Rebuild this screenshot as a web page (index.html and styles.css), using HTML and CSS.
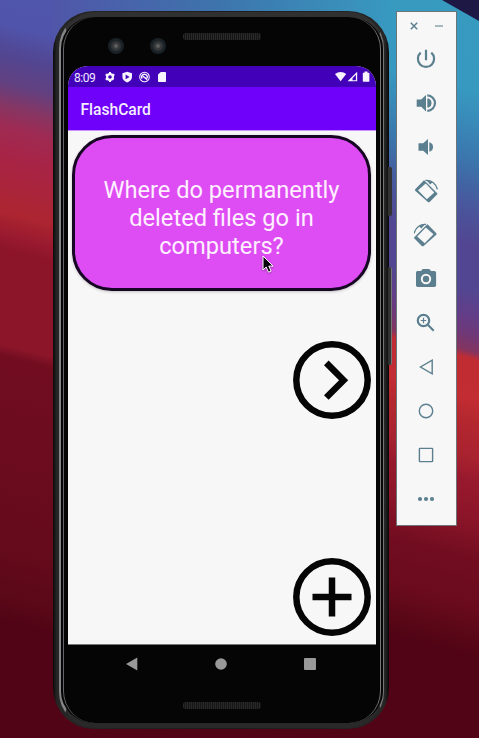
FILE: index.html
```html
<!DOCTYPE html>
<html lang="en">
<head>
<meta charset="utf-8">
<title>FlashCard</title>
<link rel="stylesheet" href="styles.css">
</head>
<body>
<svg class="wallpaper" viewBox="0 0 479 738" preserveAspectRatio="none" aria-hidden="true">
  <defs>
    <linearGradient id="west" gradientUnits="userSpaceOnUse" x1="27" y1="0" x2="-146.6" y2="694.6">
      <stop offset="0" stop-color="#5056ab"/><stop offset=".04" stop-color="#5054ab"/><stop offset=".08" stop-color="#524692"/><stop offset=".12" stop-color="#624080"/><stop offset=".15" stop-color="#863664"/><stop offset=".18" stop-color="#9f2a52"/><stop offset=".22" stop-color="#a82446"/><stop offset=".27" stop-color="#ab2538"/><stop offset=".295" stop-color="#ac2530"/><stop offset=".33" stop-color="#97182f"/><stop offset=".345" stop-color="#8c152a"/><stop offset=".475" stop-color="#8c152a"/><stop offset=".49" stop-color="#720d20"/><stop offset=".64" stop-color="#6b0c1e"/><stop offset=".76" stop-color="#630a1b"/><stop offset=".82" stop-color="#5a0818"/><stop offset=".85" stop-color="#500415"/>
    </linearGradient>
    <linearGradient id="east" gradientUnits="userSpaceOnUse" x1="468" y1="0" x2="282.3" y2="687.8">
      <stop offset="0" stop-color="#379abf"/><stop offset=".12" stop-color="#3799c0"/><stop offset=".165" stop-color="#398ab8"/><stop offset=".215" stop-color="#3b76ac"/><stop offset=".25" stop-color="#4264a2"/><stop offset=".285" stop-color="#4a549a"/><stop offset=".33" stop-color="#524692"/><stop offset=".39" stop-color="#524692"/><stop offset=".427" stop-color="#633d88"/><stop offset=".454" stop-color="#703876"/><stop offset=".475" stop-color="#85345f"/><stop offset=".485" stop-color="#c02c33"/><stop offset=".54" stop-color="#c22c32"/><stop offset=".57" stop-color="#b4272f"/><stop offset=".62" stop-color="#a8222f"/><stop offset=".65" stop-color="#98192d"/><stop offset=".7" stop-color="#8c1529"/><stop offset=".755" stop-color="#720d20"/><stop offset=".82" stop-color="#6a0b1d"/><stop offset=".86" stop-color="#5a0717"/><stop offset=".89" stop-color="#500415"/>
    </linearGradient>
    <linearGradient id="north" x1="0" y1="0" x2="1" y2="0">
      <stop offset="0" stop-color="#5056a9"/><stop offset=".5" stop-color="#3d75ac"/><stop offset="1" stop-color="#3899c0"/>
    </linearGradient>
  </defs>
  <rect width="240" height="738" fill="url(#west)"/>
  <rect x="240" width="239" height="738" fill="url(#east)"/>
  <rect x="54" width="336" height="40" fill="url(#north)"/>
  <path d="M442 0h37v21z" fill="#1d1944"/>
</svg>

<main class="desktop">
  <section class="phone">
    <i class="side-key power-key"></i><i class="side-key volume-key"></i>
    <div class="bezel"><div class="rim">
      <header class="forehead">
        <i class="lens"></i><i class="lens"></i><i class="grille"></i>
      </header>
      <div class="screen">
        <div class="status">
          <span class="clock">8:09</span>
          <svg class="status-left" width="64" height="12" viewBox="0 0 64 12" fill="#f7f3ff">
            <circle cx="6" cy="6" r="2.9" fill="none" stroke="#f7f3ff" stroke-width="2.2"/>
            <path d="M5 1h2v2H5zM5 9h2v2H5zM1.2 4.3l1-1.7 1.6 1-1 1.7zM9.2 8.9l1-1.7-1.6-1-1 1.7zM10.8 4.3l-1-1.7-1.6 1 1 1.7zM2.2 9.4l-1-1.7 1.6-1 1 1.7z"/>
            <path fill-rule="evenodd" d="M23.2.7 28 2.3v3.5c0 2.7-2 4.6-4.8 5.7-2.8-1.1-4.8-3-4.8-5.7V2.3zM21.6 3.6v4.6l4-2.3z"/>
            <circle cx="40.5" cy="6" r="4.8" fill="none" stroke="#f7f3ff" stroke-width="1.1"/>
            <path d="M38.2 7.7A2.8 2.8 0 1 1 43 7.3M39 5.2l4.2 3.4" fill="none" stroke="#f7f3ff" stroke-width="1.4"/>
            <path d="M56.8 1h4.4c.5 0 .8.3.8.8v8.4c0 .5-.3.8-.8.8h-6.4c-.5 0-.8-.3-.8-.8V3.6z"/>
          </svg>
          <svg class="status-right" width="36" height="12" viewBox="0 0 36 12" fill="#f7f3ff">
            <path d="M0 3C3.3.2 8 .2 11.2 3L5.6 10.2z"/>
            <path fill-rule="evenodd" d="M22.2.8v9.5H12.5zM20.9 3.8l-3.4 3.4 0 2H20.9z"/>
            <path d="M29.5.6h3v1.2h1.4c.3 0 .5.2.5.5v8c0 .3-.2.5-.5.5h-5.6c-.3 0-.5-.2-.5-.5v-8c0-.3.2-.5.5-.5h1.2z"/>
          </svg>
        </div>
        <div class="appbar">FlashCard</div>
        <div class="content">
          <div class="card">Where do permanently<br>deleted files go in<br>computers?
            <svg class="pointer" width="12" height="19" viewBox="0 0 12 19"><path d="M1 1v14l3.2-3 2.3 5.2 2.6-1.1-2.3-5h4.3z" fill="#08060a" stroke="#fff" stroke-width="1"/></svg>
          </div>
          <svg class="round next" width="78" height="78" viewBox="0 0 78 78"><circle cx="39" cy="39" r="35.7"/><path d="M33.300 21.900 50.600 39.200 33.300 56.500"/></svg>
          <svg class="round add" width="78" height="78" viewBox="0 0 78 78"><circle cx="39" cy="39" r="35.7"/><path d="M39 19.500v39M19.500 39h39"/></svg>
        </div>
      </div>
      <nav class="navbar">
        <svg width="12" height="14" viewBox="0 0 12 14"><path d="M0 7 11.3.6v12.8z"/></svg>
        <svg width="12" height="12" viewBox="0 0 12 12"><circle cx="6" cy="6" r="5.8"/></svg>
        <svg width="12" height="12" viewBox="0 0 12 12"><rect width="12" height="12" rx="1"/></svg>
      </nav>
      <footer class="chin"><i class="grille"></i></footer>
    </div></div>
  </section>

  <aside class="toolbar">
    <div class="window-buttons">
      <svg width="8" height="8" viewBox="0 0 8 8"><path d="M.8.8l6.4 6.4M7.2.8.8 7.2" stroke="#5b7f8e" stroke-width="1.5"/></svg>
      <svg width="8" height="8" viewBox="0 0 8 8"><path d="M0 4h8" stroke="#8fa7b1" stroke-width="1.6"/></svg>
    </div>
    <svg class="tool" viewBox="0 0 24 24"><path class="line" d="M12 2.800v10.400M6.700 5.700a8.100 8.100 0 1 0 10.600 0"/></svg>
    <svg class="tool" viewBox="0 0 24 24"><path d="M2.700 8.600h4.500L12 4v16.500l-4.800-4.800H2.700zM13.300 7.600h1.500a5 5 0 0 1 0 9h-1.500z"/><path class="line" d="M13.300 4.400a7.700 7.700 0 0 1 0 15.400"/></svg>
    <svg class="tool" viewBox="0 0 24 24"><path d="M4.500 8.300h4.700L14 4v16l-4.800-4.300H4.500zM15.300 7.500h1a5 5 0 0 1 0 9h-1z"/></svg>
    <svg class="tool" viewBox="0 0 24 24"><g id="rotate"><path fill-rule="evenodd" d="M1.200 10.300 9.200 1.900c.6-.6 1.200-.6 1.800 0l12 12c.6.6.6 1.100 0 1.700l-7.300 7.300c-.6.6-1.200.6-1.800 0L1.200 11.700c-.4-.5-.4-.9 0-1.400zM4 11.200l8.800 9 7.500-6.800-8.600-8.800z"/><path d="M11.500 1.400c5.600-.6 10.600 3.100 11.900 9" fill="none" stroke="#5b7f8e" stroke-width="1.300"/><path d="m12 .8 6.500 2.400-2.300 2.300z"/></g></svg>
    <svg class="tool" viewBox="0 0 24 24"><use href="#rotate" transform="matrix(-1 0 0 1 23.500 0)"/></svg>
    <svg class="tool" viewBox="0 0 24 24"><path fill-rule="evenodd" d="M8.700 2h6.600l1.700 2h3.400c1 0 1.700.8 1.700 1.700v12.500c0 1-.8 1.700-1.700 1.700H3.700c-1 0-1.700-.7-1.700-1.700V5.700C2 4.700 2.700 4 3.700 4H7zM12 6.800a5.200 5.200 0 1 0 0 10.400 5.200 5.200 0 0 0 0-10.400z"/><circle cx="12" cy="12" r="3.200"/></svg>
    <svg class="tool" viewBox="0 0 24 24"><circle class="line" cx="9.500" cy="9.500" r="5.700"/><path class="line" d="m13.800 13.800 5.900 5.900"/><path d="M9.500 6.800v5.400M6.800 9.500h5.400" stroke="#5b7f8e" stroke-width="1.200"/></svg>
    <svg class="tool" viewBox="0 0 24 24"><path class="thin" d="M18.200 5.200v13.600L6.500 12z"/></svg>
    <svg class="tool" viewBox="0 0 24 24"><circle class="thin" cx="12" cy="12" r="6.700"/></svg>
    <svg class="tool" viewBox="0 0 24 24"><rect class="thin" x="5.400" y="5.400" width="13.200" height="13.200" rx=".5"/></svg>
    <svg class="tool" viewBox="0 0 24 24"><circle cx="6" cy="12" r="2.100"/><circle cx="12" cy="12" r="2.100"/><circle cx="18" cy="12" r="2.100"/></svg>
  </aside>
</main>
</body>
</html>
```

FILE: styles.css
```css
* { box-sizing: border-box; }
body {
  margin: 0;
  height: 738px;
  overflow: hidden;
  background: #500415;
  font-family: Roboto, sans-serif;
}
svg { display: block; flex: none; }
.wallpaper { position: absolute; inset: 0; width: 479px; height: 738px; }
.desktop {
  position: relative;
  display: flex;
  align-items: flex-start;
  gap: 7px;
  padding: 11px 0 0 53px;
}

/* Device body */
.phone {
  position: relative;
  width: 336px;
  height: 718px;
  padding: 1px 5px 1px 6px;
  border-radius: 41px;
  background: linear-gradient(90deg, #0b0b0b, #262626 4px, #1d1d1d 50%, #262626 332px, #080808);
}
.side-key {
  position: absolute;
  right: -3px;
  width: 4px;
  border-radius: 0 2px 2px 0;
  background: #333;
}
.power-key { top: 156px; height: 49px; }
.volume-key { top: 256px; height: 98px; border-right: 1px solid #777; }
.bezel {
  height: 716px;
  padding: 0 2px;
  border: solid;
  border-width: 5px 1.500px 5px 2px;
  border-color: #303030 #777 #292929 #858585;
  border-radius: 36px;
  background: #050505;
}
.rim {
  height: 706px;
  border: solid;
  border-width: 0 1px;
  border-color: #050505 #777 #050505 #65656b;
  border-radius: 32px;
  background: #050505;
  padding: 0 2px 0 4px;
}
.forehead {
  display: flex;
  height: 49px;
  padding: 21px 0 0 40px;
  gap: 26px;
}
.lens {
  width: 16px;
  height: 16px;
  border-radius: 50%;
  background: radial-gradient(circle, #606060 0 1px, #343638 3px 4px, #182126 6px 8px);
}
.grille {
  width: 78px;
  height: 7px;
  border-radius: 3px;
  background: repeating-linear-gradient(90deg, #292929 0 1px, #161616 1px 2px);
}
.forehead .grille { margin: -5px 0 0 -9px; }

/* App screen */
.screen {
  width: 308px;
  height: 579px;
  overflow: hidden;
  border-radius: 20px 20px 0 0;
  background: #f7f7f7;
}
.status {
  display: flex;
  align-items: flex-start;
  height: 21px;
  padding: 5px 6px 0;
  background: #4300b9;
  color: #f1eaff;
}
.clock { width: 30px; font-size: 12px; line-height: 14px; letter-spacing: -.5px; }
.status-right { margin-left: auto; margin-right: -1px; }
.appbar {
  height: 43px;
  padding-left: 12.500px;
  background: #6f00fa;
  color: #f5eeff;
  font-size: 15.600px;
  font-weight: 500;
  line-height: 46px;
}
.content {
  display: flex;
  flex-direction: column;
  align-items: flex-end;
  height: 515px;
  padding: 4px 5px 8px 4px;
  border-top: 1px solid #c993fb;
  border-bottom: 1px solid #777;
}
.card {
  position: relative;
  width: 299px;
  height: 156px;
  padding-top: 38px;
  border: 3px solid #170524;
  border-radius: 40px;
  background: #de4df4;
  box-shadow: 0 1px 3px rgba(0, 0, 0, .22);
  color: #fff0ff;
  font-size: 23.650px;
  line-height: 28px;
  text-align: center;
  white-space: nowrap;
}
.pointer { position: absolute; left: 187px; top: 117px; filter: drop-shadow(0 1px 1px rgba(0, 0, 0, .3)); }
.round { fill: none; stroke: #050505; stroke-width: 6.500px; }
.next { margin-top: 50px; }
.add { margin-top: auto; }

/* System navigation */
.navbar {
  display: flex;
  align-items: center;
  justify-content: space-between;
  width: 308px;
  height: 37px;
  padding: 0 60px 0 58px;
  fill: #999;
}
.chin { display: flex; width: 308px; justify-content: center; padding-top: 20px; }

/* Emulator controls */
.toolbar {
  display: flex;
  flex-direction: column;
  align-items: center;
  gap: 20px;
  width: 61px;
  height: 515px;
  padding-right: 1px;
  border: 1px solid #6c7478;
  background: #f7f7f7;
}
.window-buttons {
  display: flex;
  gap: 17px;
  height: 15px;
  padding-top: 10px;
}
.tool { width: 24px; height: 24px; fill: #5b7f8e; }
.line { fill: none; stroke: #5b7f8e; stroke-width: 2.200px; }
.thin { fill: none; stroke: #5b7f8e; stroke-width: 1.400px; }
```
